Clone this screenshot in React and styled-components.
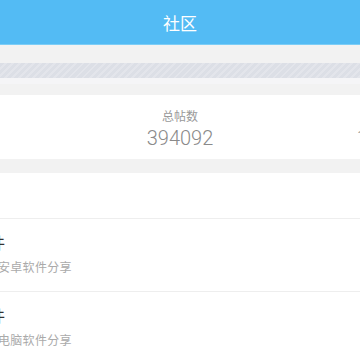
import React from 'react';
import styled, { createGlobalStyle } from 'styled-components';

const GlobalStyle = createGlobalStyle`
  html, body {
    margin: 0;
    padding: 0;
    background: #ffffff;
    overflow: hidden;
  }
  body {
    font-family: Roboto, "Noto Sans CJK SC", sans-serif;
    width: 360px;
    height: 360px;
  }
`;

const Page = styled.div`
  width: 360px;
  height: 360px;
  overflow: hidden;
  background: #ffffff;
`;

const Header = styled.header`
  height: 45px;
  background: #53bbf4;
  border-bottom: 1px solid #7ccdf6;
  display: flex;
  align-items: center;
  justify-content: center;
  color: #ffffff;
  font-size: 17px;
  box-sizing: border-box;
`;

const NoticeArea = styled.div`
  background: #f2f2f2;
  padding: 18px 0 11px;
`;

const StripeBand = styled.div`
  height: 15px;
  background: repeating-linear-gradient(
    135deg,
    #dcdfe6 0px,
    #dcdfe6 3px,
    #e3e5eb 3px,
    #e3e5eb 5px
  );
  border-bottom: 6px solid #f5f5f7;
`;

const StatCard = styled.div`
  height: 64px;
  width: 630px;
  margin-left: -135px;
  background: #ffffff;
  display: grid;
  grid-template-columns: repeat(3, 210px);
`;

const StatItem = styled.div`
  display: flex;
  flex-direction: column;
  align-items: center;
  justify-content: center;
  padding-top: 6px;
`;

const StatLabel = styled.div`
  font-size: 12px;
  line-height: 16px;
  color: #999999;
`;

const StatValue = styled.div`
  font-size: 20px;
  line-height: 26px;
  color: #8a8a8a;
  font-weight: 300;
`;

const Gap = styled.div`
  height: 14px;
  background: #f2f2f2;
`;

const SectionHead = styled.div`
  height: 46px;
  border-bottom: 1px solid #eeeeee;
  box-sizing: border-box;
`;

const ForumRow = styled.div`
  height: 73px;
  border-bottom: 1px solid #eeeeee;
  box-sizing: border-box;
  display: flex;
  flex-direction: column;
  justify-content: center;
  gap: 8px;
`;

const ForumTitle = styled.div`
  font-size: 16px;
  line-height: 18px;
  color: #333333;
  margin-left: ${p => p.$shift}px;
  white-space: nowrap;
`;

const ForumDesc = styled.div`
  font-size: 12px;
  line-height: 14px;
  color: #aaaaaa;
  margin-left: -2px;
  letter-spacing: 0.3px;
  white-space: nowrap;
`;

const stats = [
  { label: '今日帖数', value: '128' },
  { label: '总帖数', value: '394092' },
  { label: '会员数', value: '103587' },
];

const forums = [
  { title: '安卓软件', desc: '安卓软件分享' },
  { title: '电脑软件', desc: '电脑软件分享' },
];

export default function App() {
  return (
    <Page>
      <GlobalStyle />
      <Header>社区</Header>
      <NoticeArea>
        <StripeBand />
      </NoticeArea>
      <StatCard>
        {stats.map(s => (
          <StatItem key={s.label}>
            <StatLabel>{s.label}</StatLabel>
            <StatValue>{s.value}</StatValue>
          </StatItem>
        ))}
      </StatCard>
      <Gap />
      <SectionHead />
      {forums.map(f => (
        <ForumRow key={f.title}>
          <ForumTitle $shift={-59}>{f.title}</ForumTitle>
          <ForumDesc>{f.desc}</ForumDesc>
        </ForumRow>
      ))}
    </Page>
  );
}
